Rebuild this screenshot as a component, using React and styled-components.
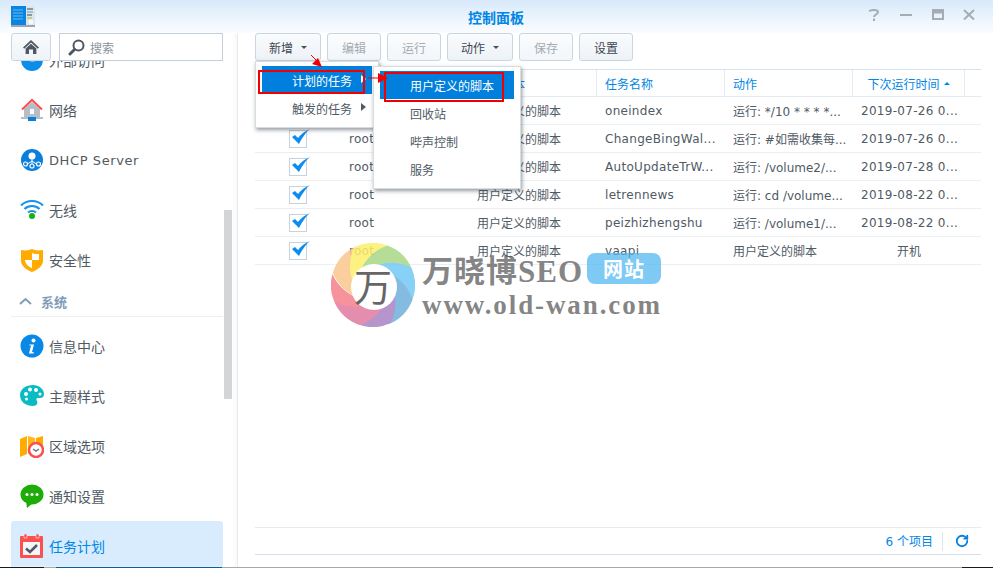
import React from 'react';
import styled, {createGlobalStyle} from 'styled-components';
import {RotateCw} from 'lucide-react';

const GlobalStyle = createGlobalStyle`
  html, body { margin: 0; padding: 0; background: #fff; }
  body { font-family: "DejaVu Sans", "Noto Sans CJK SC", sans-serif; color: #505a64; overflow: hidden; }
`;

const Root = styled.div`
  position: relative;
  width: 993px;
  height: 568px;
  overflow: hidden;
  display: flex;
  flex-direction: column;
`;

const TitleBar = styled.header`
  height: 33px;
  flex: none;
  display: flex;
  align-items: center;
  padding: 0 17px 0 11px;
  background: linear-gradient(#d8e9fa, #fbfdff);
`;

const TitleText = styled.h1`
  flex: 1;
  margin: 1px 0 0 0;
  padding-left: 90px;
  text-align: center;
  font-size: 14px;
  font-weight: 700;
  color: #0086e5;
`;

const WindowButtons = styled.div`
  display: flex;
  align-items: center;
  gap: 17px;
  margin-bottom: 3px;
`;

const Body = styled.div`
  flex: 1;
  min-height: 0;
  display: flex;
`;

const Sidebar = styled.aside`
  position: relative;
  width: 238px;
  flex: none;
  padding-left: 11px;
  box-sizing: border-box;
  display: flex;
  flex-direction: column;
  border-right: 1px solid #e6ebf0;
  background: linear-gradient(90deg, #fff 232px, #f6f7f9 238px);
`;

const SideTop = styled.div`
  flex: none;
  display: flex;
  gap: 8px;
  width: 212px;
  height: 28px;
`;

const HomeButton = styled.button`
  width: 40px;
  height: 28px;
  padding: 0;
  display: flex;
  align-items: center;
  justify-content: center;
  border: 1px solid #c9d5e1;
  border-radius: 3px;
  background: linear-gradient(#f9fbfd, #eef3f8);
`;

const SearchBox = styled.div`
  flex: 1;
  display: flex;
  align-items: center;
  gap: 5px;
  padding-left: 8px;
  border: 1px solid #c3d0dc;
  font-size: 12px;
  color: #8b949c;
  background: #fff;
`;

const SideList = styled.div`
  flex: 1;
  min-height: 0;
  width: 212px;
  overflow: hidden;
`;

const SideInner = styled.div`
  margin-top: -26px;
`;

const SideItem = styled.div`
  height: 50px;
  display: flex;
  align-items: center;
  gap: 5px;
  padding-left: 9px;
  box-sizing: border-box;
  border-radius: 3px;
  font-size: ${p => (p.$latin ? '13px' : '14px')};
  letter-spacing: ${p => (p.$latin ? '0.6px' : '0')};
  color: ${p => (p.$active ? '#0086e5' : '#505a64')};
  background: ${p => (p.$active ? 'linear-gradient(#d8ecfe 88%, #fff 100%)' : 'transparent')};
`;

const SideHeader = styled.div`
  height: 32px;
  margin-bottom: 4px;
  padding: 1px 0 0 8px;
  display: flex;
  align-items: center;
  gap: 9px;
  box-sizing: border-box;
  border-bottom: 1px solid #e8eff5;
  font-size: 13px;
  font-weight: 700;
  color: #7f9db9;
`;

const ScrollThumb = styled.div`
  position: absolute;
  left: 224px;
  top: 177px;
  width: 8px;
  height: 189px;
  background: #d3d5d7;
`;

const Pane = styled.main`
  flex: 1;
  min-width: 0;
  padding: 0 12px 0 17px;
  display: flex;
  flex-direction: column;
`;

const Toolbar = styled.div`
  flex: none;
  display: flex;
  gap: 6px;
  height: 28px;
  margin-bottom: 8px;
`;

const ToolButton = styled.button`
  width: ${p => (p.$caret ? '66px' : '54px')};
  height: 28px;
  padding: 0;
  display: flex;
  align-items: center;
  justify-content: center;
  gap: 8px;
  border: 1px solid #c9d5e1;
  border-radius: 3px;
  font: inherit;
  font-size: 12px;
  color: ${p => (p.disabled ? '#a3abb3' : '#3f4750')};
  background: ${p => (p.disabled ? 'linear-gradient(#fbfcfe, #f2f6fa)' : 'linear-gradient(#fafcfe, #edf2f7)')};
`;

const Caret = styled.i`
  display: block;
  width: 0;
  height: 0;
  border: 3px solid transparent;
  border-top: 3px solid #48525c;
  border-bottom: 0;
`;

const Table = styled.section`
  flex: 1;
  min-height: 0;
  display: flex;
  flex-direction: column;
`;

const columns = '86px 128px 128px 128px 128px 112px 16px';

const HeadRow = styled.div`
  flex: none;
  display: grid;
  grid-template-columns: ${columns};
  height: 26px;
  border-top: 1px solid #d5e2ee;
  border-bottom: 1px solid #e4ecf3;
`;

const HeadCell = styled.div`
  display: flex;
  align-items: center;
  justify-content: ${p => (p.$center ? 'center' : 'flex-start')};
  gap: 4px;
  padding-left: ${p => (p.$center ? '0' : '8px')};
  border-right: ${p => (p.$last ? '0' : '1px solid #e1ebf4')};
  font-size: 12px;
  color: #0086e5;
`;

const SortMark = styled.i`
  display: block;
  width: 0;
  height: 0;
  border: 3px solid transparent;
  border-bottom: 3px solid #0086e5;
  border-top: 0;
`;

const Rows = styled.div`
  flex: 1;
  min-height: 0;
`;

const Row = styled.div`
  display: grid;
  grid-template-columns: ${columns};
  height: 27px;
  align-items: center;
  border-bottom: 1px solid #eceff2;
  font-size: 12px;
  color: #505a64;
`;

const Cell = styled.div`
  padding-left: ${p => (p.$center ? '0' : '8px')};
  text-align: ${p => (p.$center ? 'center' : 'left')};
  white-space: nowrap;
  overflow: hidden;
  letter-spacing: ${p => (p.$latin ? '0.3px' : '0')};
`;

const CheckCell = styled.div`
  display: flex;
  justify-content: center;
  padding-top: 1px;
`;

const CheckBox = styled.span`
  position: relative;
  display: block;
  width: 16px;
  height: 16px;
  border: 1px solid #c6d3df;
  background: #fff;
`;

const Footer = styled.footer`
  flex: none;
  height: 26px;
  display: flex;
  align-items: center;
  justify-content: flex-end;
  margin-bottom: 12px;
  padding-right: 12px;
  border-top: 1px solid #e6ecf2;
  border-bottom: 1px solid #d5e0ea;
  font-size: 12px;
  color: #0086e5;
`;

const FooterCount = styled.span`
  margin-bottom: 2px;
`;

const FooterDivider = styled.span`
  width: 1px;
  height: 19px;
  margin: 0 12px 0 9px;
  background: #dde6ee;
`;

const BottomEdge = styled.div`
  flex: none;
  height: 1px;
  background: linear-gradient(90deg, #1b1b1b 0 44px, #a9a9a9 44px 56px, #0f5e92 56px 222px, #a9a9a9 222px 962px, #1b1b1b 962px 993px);
`;

const Menu = styled.div`
  position: absolute;
  left: ${p => p.$left}px;
  top: ${p => p.$top}px;
  width: ${p => p.$width}px;
  padding: 4px 6px 5px;
  box-sizing: border-box;
  background: #fff;
  border: 1px solid #d8dde2;
  box-shadow: 1px 2px 4px rgba(60, 70, 80, 0.55);
`;

const MenuItem = styled.div`
  position: relative;
  height: 28px;
  display: flex;
  align-items: center;
  padding-left: ${p => p.$indent}px;
  font-size: 12px;
  color: ${p => (p.$active ? '#fff' : '#505a64')};
  background: ${p => (p.$active ? '#0080dc' : 'transparent')};
`;

const SubArrow = styled.i`
  position: absolute;
  right: 6px;
  top: 9px;
  width: 0;
  height: 0;
  border: 4px solid transparent;
  border-left: 5px solid ${p => (p.$light ? '#fff' : '#505a64')};
  border-right: 0;
`;

const RedBox = styled.div`
  position: absolute;
  left: ${p => p.$left}px;
  top: ${p => p.$top}px;
  width: ${p => p.$width}px;
  height: ${p => p.$height}px;
  box-sizing: border-box;
  border: 2px solid #f00000;
`;

const RedArrows = styled.svg`
  position: absolute;
  left: 300px;
  top: 50px;
`;

const Watermark = styled.div`
  position: absolute;
  left: 331px;
  top: 243px;
  display: flex;
  gap: 7px;
  pointer-events: none;
`;

const MarkText = styled.div`
  display: flex;
  flex-direction: column;
  padding-top: 8px;
`;

const MarkTop = styled.div`
  display: flex;
  align-items: center;
  height: 34px;
  gap: 4px;
`;

const MarkName = styled.span`
  font-family: "Liberation Serif", "Noto Sans CJK SC", serif;
  font-size: 31px;
  font-weight: 700;
  letter-spacing: 1px;
  white-space: nowrap;
  color: rgba(100, 100, 100, 0.8);
`;

const MarkBadge = styled.span`
  width: 74px;
  height: 31px;
  display: flex;
  align-items: center;
  justify-content: center;
  border-radius: 8px;
  font-family: "Noto Sans CJK SC", sans-serif;
  font-size: 20px;
  font-weight: 700;
  letter-spacing: 1px;
  color: #fff;
  background: rgba(76, 182, 240, 0.72);
`;

const MarkUrl = styled.span`
  margin-top: 5px;
  font-family: "Liberation Serif", serif;
  font-size: 27px;
  line-height: 30px;
  font-weight: 700;
  letter-spacing: 1.9px;
  white-space: nowrap;
  color: rgba(100, 100, 100, 0.8);
`;

const MarkGlyph = styled.text`
  font-family: "Noto Sans CJK SC", sans-serif;
  font-size: 38px;
  fill: #666;
`;

const HelpIcon = () => (
  <svg width="14" height="14" viewBox="0 0 14 14" fill="none" stroke="#a4acb4" strokeWidth="2">
    <path d="M2.5 3.500C3 1.500 11 1 11 4c0 2.500-4 2.500-4 5" />
    <path d="M7 10.500v2.500" />
  </svg>
);
const MinIcon = () => (
  <svg width="16" height="14" viewBox="0 0 16 14" fill="#a4acb4"><rect x="2" y="6" width="12" height="2" /></svg>
);
const MaxIcon = () => (
  <svg width="14" height="14" viewBox="0 0 14 14" fill="none" stroke="#a4acb4" strokeWidth="2">
    <rect x="2" y="2" width="10" height="9" />
    <path d="M2 4h10" strokeWidth="3" />
  </svg>
);
const CloseIcon = () => (
  <svg width="14" height="14" viewBox="0 0 14 14" stroke="#a4acb4" strokeWidth="2"><path d="M2 2l10 9.500M12 2L2 11.500" /></svg>
);

const AppLogo = () => (
  <svg width="24" height="21" viewBox="0 0 24 21">
    <rect x="0" y="0" width="15" height="19" fill="#0a84e0" />
    <path d="M2 4h10M2 7h10M2 10h10M2 13h10" stroke="#5ec0f5" strokeWidth="1" />
    <rect x="15" y="0" width="9" height="20" fill="#dfe4e8" />
    <path d="M16 3h6" stroke="#444" /><path d="M16 6h6" stroke="#27b6e6" /><path d="M16 9h5" stroke="#444" /><path d="M16 12h5" stroke="#8fc31f" />
    <circle cx="20" cy="16" r="2.500" fill="#f5f7f8" />
    <rect x="0" y="19" width="24" height="2" fill="#9aa6b0" />
  </svg>
);

const HomeIcon = () => (
  <svg width="16" height="16" viewBox="0 0 16 16" fill="#4e5862">
    <path d="M8 1L0 8.500l1.200 1.200L8 3.400l6.800 6.300L16 8.500z" />
    <path d="M2.600 9.600L8 4.700l5.400 4.900V15H10v-4.500H6V15H2.600z" />
  </svg>
);

const SearchIcon = () => (
  <svg width="17" height="17" viewBox="0 0 17 17" fill="none" stroke="#4e5862">
    <circle cx="10.500" cy="6.500" r="5" strokeWidth="2" />
    <path d="M6.500 10.500L2 15" strokeWidth="3" strokeLinecap="round" />
  </svg>
);

const Globe = () => (
  <svg width="24" height="24" viewBox="0 0 24 24">
    <circle cx="12" cy="12" r="11" fill="#0c8ee8" />
    <path d="M3 9c4-3 13-4 18 0-3 6-14 6-18 0z" fill="#fff" />
  </svg>
);
const NetIcon = () => (
  <svg width="24" height="24" viewBox="0 0 24 24">
    <path d="M4 11l8-7 8 7v8H4z" fill="#b4bec6" />
    <path d="M2 11.500L12 2l10 9.500" fill="none" stroke="#fb5050" strokeWidth="2" />
    <rect x="10" y="11" width="4" height="5" fill="#fff" />
    <rect x="1" y="19" width="22" height="2" fill="#b4bec6" />
    <rect x="8" y="19" width="8" height="4" fill="#0a7fdc" />
  </svg>
);
const DhcpIcon = () => (
  <svg width="24" height="24" viewBox="0 0 24 24">
    <circle cx="12" cy="12" r="11" fill="#0a80de" />
    <circle cx="12" cy="8" r="3.500" fill="#fff" />
    <path d="M12 10v7M12 13l-6 4M12 13l6 4" stroke="#fff" strokeWidth="1" />
    <g fill="#0a80de" stroke="#fff" strokeWidth="1.200">
      <circle cx="5.500" cy="16" r="2" /><circle cx="12" cy="18" r="2" /><circle cx="18.500" cy="16" r="2" />
    </g>
  </svg>
);
const WifiIcon = () => (
  <svg width="24" height="24" viewBox="0 0 24 24" fill="none" stroke="#1192ec" strokeWidth="2">
    <path d="M1 7.500c6-6 16-6 22 0" />
    <path d="M4.500 11c4-4 11-4 15 0" />
    <path d="M8 14.500c2-2 6-2 8 0" />
    <circle cx="12" cy="18" r="3" fill="#16b010" stroke="none" />
  </svg>
);
const ShieldIcon = () => (
  <svg width="24" height="24" viewBox="0 0 24 24">
    <path d="M1 2c6 1 8 0 11-1 3 1 5 2 11 1v11c0 5-6 9-11 11C7 22 1 18 1 13z" fill="#ffab00" />
    <path d="M12 5c2 1 4 1 7 1v6h-7zM5 12h7v8c-3-1-7-4-7-8z" fill="#fff" />
  </svg>
);
const InfoIcon = () => (
  <svg width="24" height="24" viewBox="0 0 24 24">
    <circle cx="12" cy="12" r="11.500" fill="#0a88e6" />
    <circle cx="13.500" cy="6.500" r="2" fill="#fff" />
    <path d="M9.500 10.500h4.500l-2 7.500 2 .2-.5 1.300H9l2-8-1.800-.2z" fill="#fff" />
  </svg>
);
const PaletteIcon = () => (
  <svg width="24" height="24" viewBox="0 0 24 24">
    <path d="M13 1c6 0 11 4 11 9 0 3-2 4-4 4h-2c-2 0-2 2-1 3 1 2 0 5-4 5C6 22 0 18 0 11 0 5 6 1 13 1z" fill="#0abbc4" />
    <g fill="#fff">
      <circle cx="6" cy="10" r="2" /><circle cx="10" cy="5.500" r="2" /><circle cx="16" cy="6" r="2" /><circle cx="20" cy="10" r="1.500" /><circle cx="6.500" cy="15" r="1.500" />
    </g>
  </svg>
);
const RegionIcon = () => (
  <svg width="24" height="24" viewBox="0 0 24 24">
    <path d="M0 5l7-3v18l-7 3z" fill="#ffab00" />
    <path d="M8 2l7 2v12l-7 4z" fill="#ffb91a" />
    <path d="M16 4l7-2v10h-7z" fill="#ffab00" />
    <circle cx="16" cy="16" r="7" fill="#fff" stroke="#fb5050" strokeWidth="2.500" />
    <path d="M13 15l3 2 3-2" fill="none" stroke="#6b747c" strokeWidth="1.500" />
  </svg>
);
const ChatIcon = () => (
  <svg width="24" height="24" viewBox="0 0 24 24">
    <ellipse cx="12" cy="10.500" rx="11.500" ry="10" fill="#1eac08" />
    <path d="M6 17l1 7 6-5z" fill="#1eac08" />
    <g fill="#fff"><circle cx="7" cy="10.500" r="1.500" /><circle cx="12" cy="10.500" r="1.500" /><circle cx="17" cy="10.500" r="1.500" /></g>
  </svg>
);
const CalendarIcon = () => (
  <svg width="24" height="24" viewBox="0 0 24 24">
    <rect x="0" y="2" width="23" height="22" rx="1" fill="#fb5050" />
    <rect x="3" y="8" width="17" height="13" fill="#f4f6f8" />
    <rect x="4" y="0" width="3" height="4" fill="#fb5050" stroke="#fff" strokeWidth=".5" />
    <rect x="16" y="0" width="3" height="4" fill="#fb5050" stroke="#fff" strokeWidth=".5" />
    <path d="M6 14.500l4 3.500 7-7" fill="none" stroke="#505a64" strokeWidth="2.500" />
  </svg>
);

const Chevron = () => (
  <svg width="13" height="8" viewBox="0 0 13 8" fill="none" stroke="#7f9db9" strokeWidth="2"><path d="M1 7l5.500-5L12 7" /></svg>
);

const CheckMark = () => (
  <svg width="20" height="18" viewBox="0 0 20 18" style={{position: 'absolute', left: 1, top: -3}}>
    <path d="M1 9l3-2 3 3c3-4 7-7 12-9-4 3-8 9-11 15z" fill="#0a8cf0" />
  </svg>
);

// bands of the round watermark logo, each starts on the rim and curls inwards
const bands = [
  {color: '#f57f8a', mid: 170},
  {color: '#fbc78c', mid: 222},
  {color: '#fdf06c', mid: 268},
  {color: '#a9d886', mid: 315},
  {color: '#72c9f4', mid: 0},
  {color: '#6eb0dc', mid: 45},
  {color: '#a983c2', mid: 90},
  {color: '#e07a9e', mid: 132},
];

const polar = (r, deg) => {
  const a = (deg * Math.PI) / 180;
  return `${(42 + r * Math.cos(a)).toFixed(1)} ${(42 + r * Math.sin(a)).toFixed(1)}`;
};

const bandPath = (from, to) =>
  `M${polar(42, from)} A42 42 0 0 1 ${polar(42, to)} Q${polar(33, to - 30)} ${polar(18, to - 75)} L${polar(18, from - 75)} Q${polar(33, from - 30)} ${polar(42, from)}Z`;

const SwirlLogo = () => (
  <svg width="84" height="84" viewBox="0 0 84 84">
    <g opacity="0.85">
      {bands.map(({color, mid}) => (
        <path key={mid} d={bandPath(mid - 25, mid + 25)} fill={color} />
      ))}
    </g>
    <circle cx="43" cy="44" r="23" fill="#fff" />
    <MarkGlyph x="23" y="58">万</MarkGlyph>
  </svg>
);

const sideTop = [
  {Icon: Globe, label: '外部访问'},
  {Icon: NetIcon, label: '网络'},
  {Icon: DhcpIcon, label: 'DHCP Server', latin: true},
  {Icon: WifiIcon, label: '无线'},
  {Icon: ShieldIcon, label: '安全性'},
];

const sideSystem = [
  {Icon: InfoIcon, label: '信息中心'},
  {Icon: PaletteIcon, label: '主题样式'},
  {Icon: RegionIcon, label: '区域选项'},
  {Icon: ChatIcon, label: '通知设置'},
  {Icon: CalendarIcon, label: '任务计划', active: true},
];

const tasks = [
  ['oneindex', '运行: */10 * * * *...', '2019-07-26 0...'],
  ['ChangeBingWal...', '运行: #如需收集每...', '2019-07-26 0...'],
  ['AutoUpdateTrW...', '运行: /volume2/...', '2019-07-28 0...'],
  ['letrennews', '运行: cd /volume...', '2019-08-22 0...'],
  ['peizhizhengshu', '运行: /volume1/...', '2019-08-22 0...'],
  ['vaapi', '用户定义的脚本', '开机'],
];

const SideRow = ({item}) => (
  <SideItem $active={item.active} $latin={item.latin}>
    <item.Icon />
    {item.label}
  </SideItem>
);

const App = () => {
  return (
    <Root>
      <GlobalStyle />
      <TitleBar>
        <AppLogo />
        <TitleText>控制面板</TitleText>
        <WindowButtons>
          <HelpIcon />
          <MinIcon />
          <MaxIcon />
          <CloseIcon />
        </WindowButtons>
      </TitleBar>
      <Body>
        <Sidebar>
          <SideTop>
            <HomeButton><HomeIcon /></HomeButton>
            <SearchBox><SearchIcon />搜索</SearchBox>
          </SideTop>
          <SideList>
            <SideInner>
              {sideTop.map(item => <SideRow key={item.label} item={item} />)}
              <SideHeader><Chevron />系统</SideHeader>
              {sideSystem.map(item => <SideRow key={item.label} item={item} />)}
            </SideInner>
          </SideList>
          <ScrollThumb />
        </Sidebar>
        <Pane>
          <Toolbar>
            <ToolButton $caret>新增<Caret /></ToolButton>
            <ToolButton disabled>编辑</ToolButton>
            <ToolButton disabled>运行</ToolButton>
            <ToolButton $caret>动作<Caret /></ToolButton>
            <ToolButton disabled>保存</ToolButton>
            <ToolButton>设置</ToolButton>
          </Toolbar>
          <Table>
            <HeadRow>
              <HeadCell $center>已启动</HeadCell>
              <HeadCell>用户账号</HeadCell>
              <HeadCell>任务脚本</HeadCell>
              <HeadCell>任务名称</HeadCell>
              <HeadCell>动作</HeadCell>
              <HeadCell $center>下次运行时间<SortMark /></HeadCell>
              <HeadCell $last />
            </HeadRow>
            <Rows>
              {tasks.map(([name, action, next]) => (
                <Row key={name}>
                  <CheckCell><CheckBox><CheckMark /></CheckBox></CheckCell>
                  <Cell $latin>root</Cell>
                  <Cell>用户定义的脚本</Cell>
                  <Cell $latin>{name}</Cell>
                  <Cell>{action}</Cell>
                  {next === '开机' ? <Cell $center>{next}</Cell> : <Cell $latin>{next}</Cell>}
                  <Cell />
                </Row>
              ))}
            </Rows>
            <Footer>
              <FooterCount>6 个项目</FooterCount>
              <FooterDivider />
              <RotateCw size={14} strokeWidth={3.2} color="#0a80de" />
            </Footer>
          </Table>
        </Pane>
      </Body>
      <BottomEdge />

      <Menu $left={255} $top={61} $width={124}>
        <MenuItem $active $indent={30}>计划的任务<SubArrow $light /></MenuItem>
        <MenuItem $indent={30}>触发的任务<SubArrow /></MenuItem>
      </Menu>
      <Menu $left={373} $top={66} $width={148}>
        <MenuItem $active $indent={30}>用户定义的脚本</MenuItem>
        <MenuItem $indent={30}>回收站</MenuItem>
        <MenuItem $indent={30}>哔声控制</MenuItem>
        <MenuItem $indent={30}>服务</MenuItem>
      </Menu>

      <RedBox $left={258} $top={70} $width={107} $height={24} />
      <RedBox $left={384} $top={72} $width={120} $height={30} />
      <RedArrows width="100" height="40" viewBox="0 0 100 40">
        <path d="M11 5l9 9" stroke="#f00000" strokeWidth="1" />
        <path d="M22 17l-10-3 6-6z" fill="#f00000" />
        <path d="M68 28h13" stroke="#f00000" strokeWidth="1" />
        <path d="M88 28l-10-5v10z" fill="#f00000" />
      </RedArrows>

      <Watermark>
        <SwirlLogo />
        <MarkText>
          <MarkTop>
            <MarkName>万晓博SEO</MarkName>
            <MarkBadge>网站</MarkBadge>
          </MarkTop>
          <MarkUrl>www.old-wan.com</MarkUrl>
        </MarkText>
      </Watermark>
    </Root>
  );
};

export default App;
